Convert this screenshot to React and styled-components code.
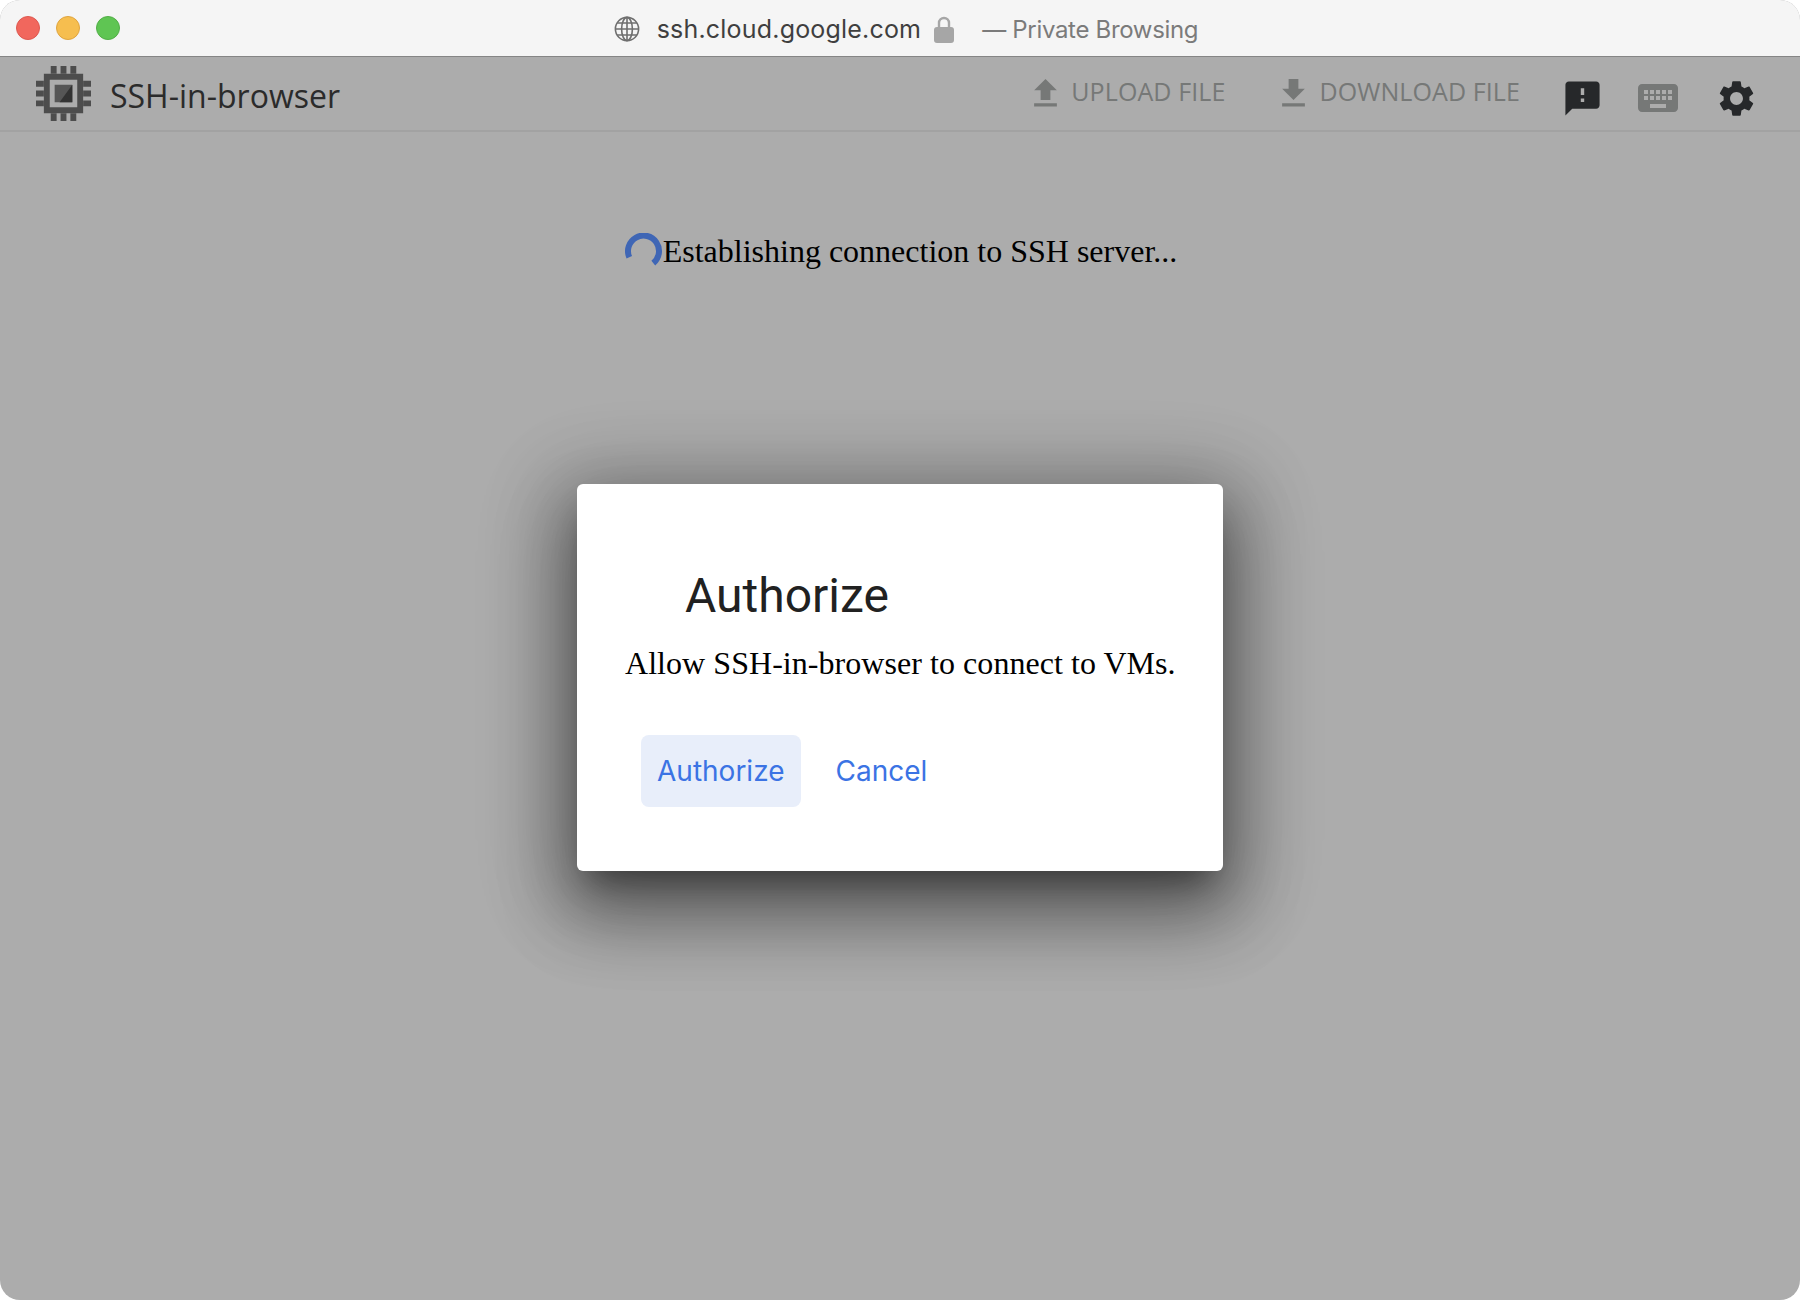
import React from "react";
import styled, { createGlobalStyle } from "styled-components";

const GlobalStyle = createGlobalStyle`
  html, body {
    margin: 0;
    padding: 0;
    background-color: #ffffff;
  }
`;

const Window = styled.div`
  position: relative;
  display: flex;
  flex-direction: column;
  width: 1800px;
  height: 1300px;
  background-color: #acacac;
  border-radius: 20px;
  overflow: hidden;
`;

const TitleBar = styled.div`
  display: grid;
  grid-template-columns: 1fr auto 1fr;
  align-items: center;
  height: 56px;
  flex-shrink: 0;
  background-color: #f5f5f5;
  border-bottom: 1px solid #858585;
`;

const Lights = styled.div`
  display: flex;
  gap: 16px;
  padding-left: 16px;
`;

const Light = styled.span`
  width: 22px;
  height: 22px;
  border-radius: 50%;
  background-color: ${(props) => props.$fill};
  border: 1px solid ${(props) => props.$edge};
`;

const Address = styled.div`
  display: flex;
  align-items: center;
  margin-left: 12px;
  padding-top: 2px;
  font-family: "Inter", "Liberation Sans", sans-serif;
  font-size: 25px;
  color: #3f3f3f;
  white-space: nowrap;
`;

const Host = styled.span`
  margin: 0 13px 0 17px;
  letter-spacing: 0.19px;
`;

const PrivateLabel = styled.span`
  margin-left: 28px;
  font-size: 24px;
  letter-spacing: -0.32px;
  color: #7b7b7b;
`;

const Toolbar = styled.div`
  display: flex;
  align-items: center;
  height: 73px;
  flex-shrink: 0;
  padding: 0 42px 0 36px;
  border-bottom: 2px solid #a2a2a2;
`;

const AppTitle = styled.span`
  margin: 3px 0 0 19px;
  font-family: "Open Sans", "Liberation Sans", sans-serif;
  font-size: 32px;
  color: #2b2b2b;
`;

const Actions = styled.div`
  display: flex;
  align-items: center;
  margin-left: auto;
`;

const FileButton = styled.button`
  display: flex;
  align-items: center;
  gap: 6px;
  margin-right: ${(props) => props.$after};
  padding: 0;
  border: none;
  background: none;
  font-family: "Open Sans", "Liberation Sans", sans-serif;
  font-size: 25px;
  line-height: 34px;
  color: #767877;
`;

const ButtonLabel = styled.span`
  position: relative;
  top: -3px;
  letter-spacing: 0.1px;
`;

const IconButton = styled.span`
  display: flex;
  padding-top: 9px;
  margin-right: ${(props) => props.$after};
`;

const Content = styled.main`
  display: flex;
  justify-content: center;
  padding-top: 99px;
  font-family: "Liberation Serif", "Times New Roman", serif;
  font-size: 32px;
  color: #000000;
`;

const Status = styled.div`
  display: flex;
  align-items: center;
  height: 40px;
  margin-left: 2px;
`;

const Overlay = styled.div`
  position: absolute;
  top: 484px;
  left: 0;
  right: 0;
  display: flex;
  justify-content: center;
`;

const Dialog = styled.div`
  display: flex;
  flex-direction: column;
  width: 646px;
  height: 387px;
  box-sizing: border-box;
  padding: 84px 48px 0 48px;
  background-color: #ffffff;
  border-radius: 6px;
  box-shadow:
    0 22px 30px -14px rgba(0, 0, 0, 0.4),
    0 40px 70px 6px rgba(0, 0, 0, 0.26),
    0 18px 70px 24px rgba(0, 0, 0, 0.2),
    0 18px 92px 16px rgba(0, 0, 0, 0.15);
`;

const DialogTitle = styled.h2`
  margin: 0 0 21px 60px;
  font-family: "Roboto", "Liberation Sans", sans-serif;
  font-size: 48px;
  font-weight: 400;
  line-height: 56px;
  color: #212121;
`;

const DialogText = styled.p`
  margin: 0 0 53px 0;
  font-family: "Liberation Serif", "Times New Roman", serif;
  font-size: 32px;
  line-height: 37px;
  letter-spacing: 0.05px;
  color: #000000;
  white-space: nowrap;
`;

const DialogButtons = styled.div`
  display: flex;
  gap: 19px;
  margin-left: 16px;
`;

const DialogButton = styled.button`
  height: 72px;
  padding: 0 16px;
  border: none;
  border-radius: 8px;
  background-color: ${(props) => (props.$active ? "#e8eefa" : "transparent")};
  font-family: "Inter", "Liberation Sans", sans-serif;
  font-size: 28px;
  color: #3b73e4;
`;

function ChipIcon() {
  return (
    <svg width="55" height="55" viewBox="0 0 56 56" fill="#4d4d4d">
      <path d="M8 8h40v40H8zM14 14v28h28V14z" fillRule="evenodd" />
      <path d="M15 0h6v8h-6zM25 0h6v8h-6zM35 0h6v8h-6zM15 48h6v8h-6zM25 48h6v8h-6zM35 48h6v8h-6zM0 15h8v6H0zM0 25h8v6H0zM0 35h8v6H0zM48 15h8v6h-8zM48 25h8v6h-8zM48 35h8v6h-8z" />
      <path d="M19 19h18v18H19z" fill="#565656" />
      <path d="M37 19v18H24z" fill="#333333" />
    </svg>
  );
}

function GlobeIcon() {
  return (
    <svg width="26" height="26" viewBox="0 0 26 26" fill="none" stroke="#6f6f6f" strokeWidth="1.6">
      <circle cx="13" cy="13" r="11.6" />
      <ellipse cx="13" cy="13" rx="5.4" ry="11.6" />
      <path d="M13 1.4v23.2M1.4 13h23.2M3.2 7h19.6M3.2 19h19.6" />
    </svg>
  );
}

function LockIcon() {
  return (
    <svg width="20" height="27" viewBox="0 0 20 27">
      <path d="M5 12V7a5 5 0 0 1 10 0v5" fill="none" stroke="#a6a6a6" strokeWidth="2.4" />
      <rect x="0" y="11" width="20" height="16" rx="3" fill="#a6a6a6" />
    </svg>
  );
}

function UploadIcon() {
  return (
    <svg width="39" height="39" viewBox="0 0 24 24" fill="#767877">
      <path d="M9 16h6v-6h4l-7-7-7 7h4zm-4 2h14v2H5z" />
    </svg>
  );
}

function DownloadIcon() {
  return (
    <svg width="39" height="39" viewBox="0 0 24 24" fill="#767877">
      <path d="M19 9h-4V3H9v6H5l7 7 7-7zM5 18v2h14v-2H5z" />
    </svg>
  );
}

function FeedbackIcon() {
  return (
    <svg width="41" height="41" viewBox="0 0 24 24" fill="#26282a">
      <path d="M20 2H4c-1.1 0-1.99.9-1.99 2L2 22l4-4h14c1.1 0 2-.9 2-2V4c0-1.1-.9-2-2-2zm-7 12h-2v-2h2v2zm0-4h-2V6h2v4z" />
    </svg>
  );
}

function KeyboardIcon() {
  return (
    <svg width="48" height="48" viewBox="0 0 24 24" fill="#767877">
      <path d="M20 5H4c-1.1 0-1.99.9-1.99 2L2 17c0 1.1.9 2 2 2h16c1.1 0 2-.9 2-2V7c0-1.1-.9-2-2-2zm-9 3h2v2h-2V8zm0 3h2v2h-2v-2zM8 8h2v2H8V8zm0 3h2v2H8v-2zm-1 2H5v-2h2v2zm0-3H5V8h2v2zm9 7H8v-2h8v2zm0-4h-2v-2h2v2zm0-3h-2V8h2v2zm3 3h-2v-2h2v2zm0-3h-2V8h2v2z" />
    </svg>
  );
}

function SettingsIcon() {
  return (
    <svg width="43" height="43" viewBox="0 0 24 24" fill="#26282a">
      <path d="M19.14 12.94c.04-.3.06-.61.06-.94 0-.32-.02-.64-.07-.94l2.03-1.58c.18-.14.23-.41.12-.61l-1.92-3.32c-.12-.22-.37-.29-.59-.22l-2.39.96c-.5-.38-1.03-.7-1.62-.94L14.4 2.81c-.04-.24-.24-.41-.48-.41h-3.84c-.24 0-.43.17-.47.41L9.25 5.35c-.59.24-1.13.57-1.62.94l-2.39-.96c-.22-.08-.47 0-.59.22L2.74 8.87c-.12.21-.08.47.12.61l2.03 1.58c-.05.3-.09.63-.09.94s.02.64.07.94l-2.03 1.58c-.18.14-.23.41-.12.61l1.92 3.32c.12.22.37.29.59.22l2.39-.96c.5.38 1.03.7 1.62.94l.36 2.54c.05.24.24.41.48.41h3.84c.24 0 .44-.17.47-.41l.36-2.54c.59-.24 1.13-.56 1.62-.94l2.39.96c.22.08.47 0 .59-.22l1.92-3.32c.12-.22.07-.47-.12-.61l-2.01-1.58zM12 15.6c-1.98 0-3.6-1.62-3.6-3.6s1.62-3.6 3.6-3.6 3.6 1.62 3.6 3.6-1.62 3.6-3.6 3.6z" />
    </svg>
  );
}

function Spinner() {
  return (
    <svg width="38" height="36" viewBox="0 0 38 36" fill="none">
      <path d="M4.3 24.3A15.5 15.5 0 1 1 28.3 30.1" stroke="#3f66b5" strokeWidth="6" />
    </svg>
  );
}

export default function App() {
  return (
    <Window>
      <GlobalStyle />
      <TitleBar>
        <Lights>
          <Light $fill="#f1675d" $edge="#dd5950" />
          <Light $fill="#f6be4f" $edge="#dfa43f" />
          <Light $fill="#5fc553" $edge="#52ae47" />
        </Lights>
        <Address>
          <GlobeIcon />
          <Host>ssh.cloud.google.com</Host>
          <LockIcon />
          <PrivateLabel>— Private Browsing</PrivateLabel>
        </Address>
      </TitleBar>
      <Toolbar>
        <ChipIcon />
        <AppTitle>SSH-in-browser</AppTitle>
        <Actions>
          <FileButton $after="49px">
            <UploadIcon />
            <ButtonLabel>UPLOAD FILE</ButtonLabel>
          </FileButton>
          <FileButton $after="42px">
            <DownloadIcon />
            <ButtonLabel>DOWNLOAD FILE</ButtonLabel>
          </FileButton>
          <IconButton $after="31px">
            <FeedbackIcon />
          </IconButton>
          <IconButton $after="33px">
            <KeyboardIcon />
          </IconButton>
          <IconButton $after="0">
            <SettingsIcon />
          </IconButton>
        </Actions>
      </Toolbar>
      <Content>
        <Status>
          <Spinner />
          Establishing connection to SSH server...
        </Status>
      </Content>
      <Overlay>
        <Dialog>
          <DialogTitle>Authorize</DialogTitle>
          <DialogText>Allow SSH-in-browser to connect to VMs.</DialogText>
          <DialogButtons>
            <DialogButton $active>Authorize</DialogButton>
            <DialogButton>Cancel</DialogButton>
          </DialogButtons>
        </Dialog>
      </Overlay>
    </Window>
  );
}
